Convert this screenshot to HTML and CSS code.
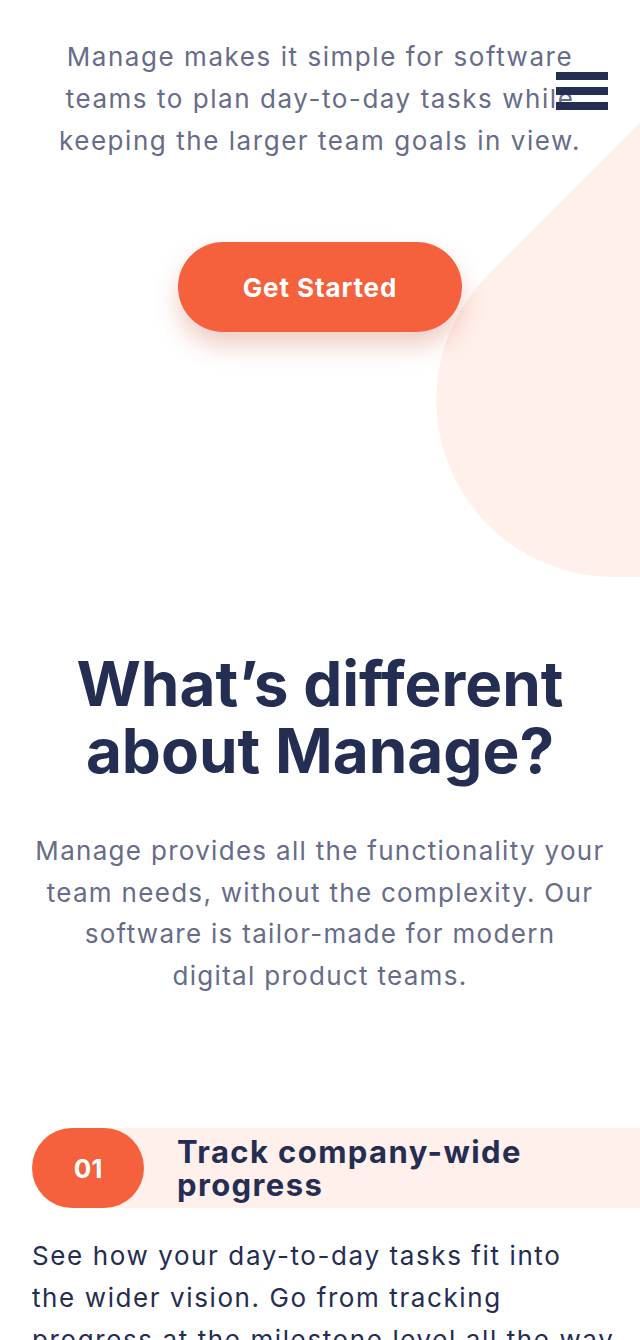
FILE: index.html
```html
<!DOCTYPE html>
<html lang="en">
<head>
<meta charset="utf-8">
<title>Manage</title>
<link rel="stylesheet" href="styles.css">
</head>
<body>
<svg class="blob" width="640" height="600" viewBox="0 0 640 600" aria-hidden="true">
  <path d="M 640 123 L 488 275 A 177 177 0 0 0 613 577 L 640 577 Z" fill="#fff0eb"/>
</svg>
<button class="menu" aria-label="Menu"><span></span><span></span><span></span></button>
<main>
  <section class="hero">
    <p class="hero-text">Manage makes it simple for software<br>teams to plan day-to-day tasks while<br>keeping the larger team goals in view.</p>
    <a class="cta" href="#">Get Started</a>
  </section>
  <section class="diff">
    <h2 class="diff-title">What’s different<br>about Manage?</h2>
    <p class="diff-text">Manage provides all the functionality your<br>team needs, without the complexity. Our<br>software is tailor-made for modern<br>digital product teams.</p>
  </section>
  <section class="features">
    <div class="feature-head">
      <span class="num">01</span>
      <h3 class="feature-title">Track company-wide<br>progress</h3>
    </div>
    <p class="feature-text">See how your day-to-day tasks fit into<br>the wider vision. Go from tracking<br>progress at the milestone level all the way<br>down to the smallest of details.</p>
  </section>
</main>
</body>
</html>
```
FILE: styles.css
```css
* { box-sizing: border-box; }
html, body { margin: 0; padding: 0; }
body {
  font-family: "Inter", "Liberation Sans", sans-serif;
  background: #fff;
  color: #242d52;
  position: relative;
  overflow: hidden;
  width: 640px;
  height: 1340px;
}
.blob {
  position: absolute;
  top: 0;
  left: 0;
  z-index: 0;
}
.menu {
  position: fixed;
  top: 72px;
  left: 556px;
  width: 52px;
  height: 38px;
  padding: 0;
  border: 0;
  background: transparent;
  display: flex;
  flex-direction: column;
  justify-content: space-between;
  z-index: 5;
}
.menu span {
  display: block;
  height: 8px;
  background: #242d52;
}
main { position: relative; z-index: 1; }
.hero {
  padding-top: 36px;
  display: flex;
  flex-direction: column;
  align-items: center;
}
.hero-text {
  margin: 0;
  font-size: 26px;
  line-height: 42px;
  letter-spacing: 1.55px;
  color: #666c89;
  text-align: center;
  white-space: nowrap;
}
.cta {
  margin-top: 80px;
  width: 284px;
  height: 90px;
  border-radius: 45px;
  background: #f5613d;
  color: #fff;
  font-weight: 700;
  font-size: 26px;
  letter-spacing: 0.9px;
  text-decoration: none;
  display: flex;
  align-items: center;
  justify-content: center;
  box-shadow: 0 14px 24px rgba(200, 80, 50, 0.28);
}
.diff {
  padding-top: 318px;
  text-align: center;
}
.diff-title {
  margin: 0;
  font-size: 62px;
  line-height: 67px;
  font-weight: 700;
  color: #242d52;
}
.diff-text {
  margin: 46px 0 0;
  font-size: 26px;
  line-height: 41.5px;
  letter-spacing: 1.3px;
  color: #666c89;
  white-space: nowrap;
}
.features {
  padding: 132px 0 0 32px;
}
.feature-head {
  display: flex;
  align-items: center;
  background: #fff0eb;
  border-radius: 40px 0 0 40px;
  height: 80px;
}
.num {
  width: 112px;
  height: 80px;
  border-radius: 40px;
  background: #f5613d;
  color: #fff;
  font-weight: 700;
  font-size: 26px;
  display: flex;
  align-items: center;
  justify-content: center;
  flex-shrink: 0;
}
.feature-title {
  margin: 0 0 0 33px;
  font-size: 31px;
  line-height: 33px;
  letter-spacing: 1.4px;
  font-weight: 700;
  color: #242d52;
}
.feature-text {
  margin: 27px 0 0;
  font-size: 26px;
  line-height: 42px;
  letter-spacing: 1.6px;
  color: #242d52;
  white-space: nowrap;
}
```
